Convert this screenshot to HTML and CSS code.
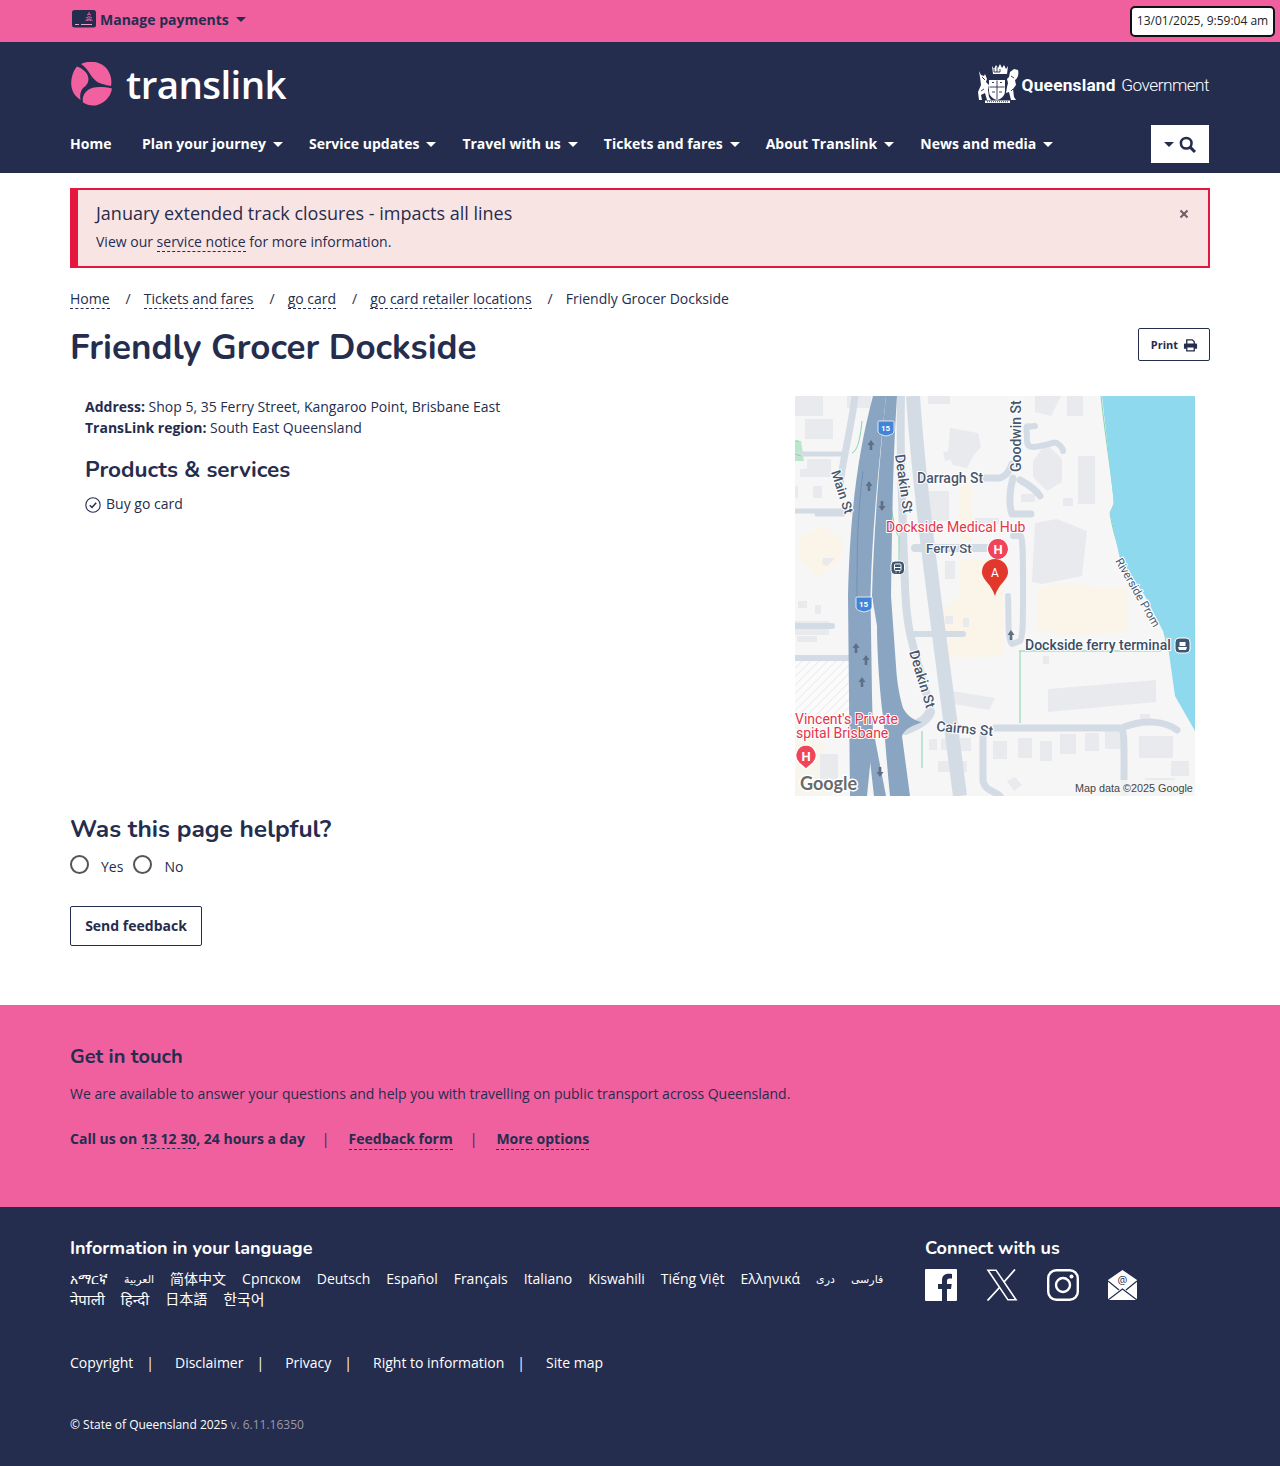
FILE: index.html
```html
<!DOCTYPE html>
<html lang="en">
<head>
<meta charset="utf-8">
<title>Friendly Grocer Dockside</title>
<link rel="stylesheet" href="styles.css">
</head>
<body>
<div class="topbar">
  <div class="topbar-inner">
    <a class="manage">
      <svg class="manage-icon" viewBox="0 0 24 18"><rect width="24" height="17.500" rx="2.500" fill="#252d4e"/><path d="M3 14.500h4M9 14.500h11" stroke="#e9a0c4" stroke-width="1.100"/><path d="M13.500 11a4 4 0 0 1 7 0M15 11a2.300 2.300 0 0 1 4 0M14 8a4.500 4.500 0 0 1 6 0M15 5a3 3 0 0 1 4 0M16 3h2" fill="none" stroke="#f1609f" stroke-width="1"/></svg>
      <span>Manage payments</span><i class="caret dark"></i>
    </a>
  </div>
  <div class="clock">13/01/2025, 9:59:04 am</div>
</div>
<header class="header">
  <div class="brand-row">
    <a class="logo">
      <svg class="logo-mark" viewBox="0 0 44 44"><g fill="#f1609f"><path d="M11 2C18-1.500 28-1 34 4C40 9 42.500 17 41 24C34 22.500 28 21.500 25 18C20 14 18 6 11 2Z"/><path d="M7 4.500C2 10 0 20 2 27C3 31 6 35 10.500 38C9.500 32 11 27 15 24.500C20 20 19 14 15.500 10C13 7.500 10.500 5.500 7 4.500Z"/><path d="M13 40.500C12 35 14 31 18 28C22 25 30 24 42 26.500C41 33 37 38 32 41C26 44.500 19 44.500 13 40.500Z"/></g></svg>
      <span class="logo-text">translink</span>
    </a>
    <div class="qld">
      <svg class="crest" viewBox="0 0 44 44">
        <g fill="#fff">
          <path d="M16 4l2 3 2-4 2 3 2-4 2 4 2-3 2 4 2-3-1 8H17z"/>
          <path d="M13 18h16v11c0 5-4 8-8 9-4-1-8-4-8-9z"/>
          <path d="M3 9l2 4 3 1 1-2 2 5-1 3 3 3-1 5 1 7 2 3h-4l-2-7-4 2 1 5H3l-1-8 3-7-1-8z"/>
          <path d="M42 8c1 4 0 8-3 10l1 5-3 4 1 8 2 3h-5l-2-8-3 1 1-6 1-4-1-4 2-2 1-5 4-3z"/>
          <path d="M9 38.500h25v2.500H9z"/>
        </g>
        <g fill="none" stroke="#252d4e" stroke-width=".9">
          <path d="M21 18.500v19M13.500 25h15M16 20.500h2M24 20.500h2M16 30h3M23 30h3M15 14.500h12M18 10h6M18 7v3M21 5v5M24 7v3"/>
          <path d="M11 39.700h21" stroke-dasharray="1 1"/>
          <path d="M6 15l3 3M35 14l3 2M5 29l3-2M35 29l2-2"/>
        </g>
      </svg>
      <span class="qld-text"><b>Queensland</b> Government</span>
    </div>
  </div>
  <nav class="nav">
    <ul class="nav-list">
      <li class="nav-home">Home</li>
      <li>Plan your journey<i class="caret"></i></li>
      <li>Service updates<i class="caret"></i></li>
      <li>Travel with us<i class="caret"></i></li>
      <li>Tickets and fares<i class="caret"></i></li>
      <li>About Translink<i class="caret"></i></li>
      <li>News and media<i class="caret"></i></li>
    </ul>
    <button class="search"><i class="caret dark"></i><svg class="search-icon" viewBox="0 0 16 16"><circle cx="6.800" cy="6.800" r="5" fill="none" stroke="#252d4e" stroke-width="2.400"/><path d="M10.500 10.500L15 15" stroke="#252d4e" stroke-width="2.800"/></svg></button>
  </nav>
</header>
<main class="main">
  <div class="alert">
    <div>
      <p class="alert-title">January extended track closures - impacts all lines</p>
      <p class="alert-text">View our <a class="dash">service notice</a> for more information.</p>
    </div>
    <svg class="alert-close" viewBox="0 0 10 10"><path d="M1.500 1.500l7 7M8.500 1.500l-7 7" stroke="#6b5f66" stroke-width="2"/></svg>
  </div>
  <ol class="crumbs">
    <li><a class="dash">Home</a></li>
    <li><a class="dash">Tickets and fares</a></li>
    <li><a class="dash">go card</a></li>
    <li><a class="dash">go card retailer locations</a></li>
    <li>Friendly Grocer Dockside</li>
  </ol>
  <div class="title-row">
    <h1>Friendly Grocer Dockside</h1>
    <button class="print">Print
      <svg class="print-icon" viewBox="0 0 16 14"><path d="M4 6V1.500h6l2 2V6" fill="none" stroke="#252d4e" stroke-width="1.400"/><path d="M1 6.500a1 1 0 0 1 1-1h12a1 1 0 0 1 1 1V11h-3V9H4v2H1z" fill="#252d4e"/><path d="M4 9h8v4.300H4z" fill="none" stroke="#252d4e" stroke-width="1.400"/></svg>
    </button>
  </div>
  <div class="detail">
    <div class="info">
      <p><b>Address:</b> Shop 5, 35 Ferry Street, Kangaroo Point, Brisbane East</p>
      <p><b>TransLink region:</b> South East Queensland</p>
      <h2>Products &amp; services</h2>
      <div class="service">
        <svg class="check" viewBox="0 0 16 16"><circle cx="8" cy="8" r="7.200" fill="none" stroke="#252d4e" stroke-width="1.100"/><path d="M4.800 8.300l2.200 2.200 4.200-4.700" fill="none" stroke="#252d4e" stroke-width="1.500"/></svg>
        <span>Buy go card</span>
      </div>
    </div>
    <svg class="map" viewBox="0 0 400 400">
      <rect width="400" height="400" fill="#f6f6f6"/>
      <g fill="#faf5e8">
        <path d="M5 140l22-10 22 15-4 20-22 15-20-18z"/>
        <path d="M165 163h43v97l-70 2v-42l27-20z"/>
        <path d="M242 192l30-5 30 4 30 1v44l-60 4-30-6z"/>
        <path d="M165 90h12v55h-12z"/>
        <rect x="0" y="345" width="30" height="55" opacity=".6"/>
      </g>
      <path d="M0 45h6l3 20H0z" fill="#b8e8c9"/>
      <defs><pattern id="hatch" width="6" height="6" patternUnits="userSpaceOnUse" patternTransform="rotate(-45)"><rect width="6" height="6" fill="#fbfbfb"/><path d="M0 0h6" stroke="#e3e3e3" stroke-width="1.200"/></pattern></defs>
      <rect x="0" y="264" width="54" height="60" fill="url(#hatch)"/>
      <g fill="#e9eaed">
        <path d="M0 0h28v20H0zM10 23h28v20H10zM52 0h24v12H52zM133 0h22v8h-22zM12 63h24v18H12zM18 90h9v12h-9zM5 73h7v8H5zM0 90h3v12H0z"/>
        <path d="M155 32l28 5 3 14-8 9-6 12-14-3-5-10z"/><path d="M148 56l8-1 2 8-8 2z"/>
        <path d="M240 0h26l-10 20-16-4zM272 0h16v20h-16z"/>
        <path d="M238 65l13-18 16 16v23l-15 9-14-14z"/><path d="M283 60h17v48h-17z"/>
        <path d="M240 127l22-4 30 12-5 45-40 8-10-2z"/><path d="M180 122h24v6h-24z"/>
        <path d="M132 95h22v30h-22zM226 98h14v8h-14zM268 102h10v8h-10z"/>
        <path d="M150 165h10v18h-10zM28 162h12l-8 8-5-2zM3 205h9v7H3zM20 209h6v9h-6zM0 225h34v14H0zM2 240h20v6H2zM150 220h8v8h-8zM168 222h6v9h-6zM248 260h6v8h-6z"/>
        <path d="M253 293l108-9v22l-108 10z"/><path d="M345 318h10v6h-10z"/>
        <path d="M157 295l43 7-6 12-35-6zM134 343h8v11h-8zM146 343h8v11h-8zM165 342h11v13h-11zM143 365h29v11h-29z"/>
        <path d="M198 345h14v18h-14zM223 342h14l0 20h-14zM245 345h12v20h-12zM265 338h16v20h-16zM290 337h14v18h-14zM310 335h16v18h-16z"/>
        <path d="M344 340h34v22h-34zM376 365h18v15h-18zM350 382h30v18h-30z"/><path d="M212 385l8-4 7 8-8 6z"/>
        <path d="M25 358h18v25H25z"/>
      </g>
      <rect x="153" y="343" width="8" height="11" fill="#f8f0d8"/>
      <g fill="none" stroke="#d3dce5" stroke-linecap="round" stroke-linejoin="round">
        <path d="M60 0C55 40 48 60 45 90" stroke-width="7"/>
        <path d="M0 58h46M0 115h56M22 118h26" stroke-width="5"/>
        <path d="M0 230h37" stroke-width="6"/><path d="M0 262h55" stroke-width="6"/>
        <path d="M118 0C122 60 130 130 139 200L152 300 165 400" stroke-width="14" stroke-linecap="butt"/>
        <path d="M106 0C105 40 106 80 108 135S110 210 114 232C120 265 132 290 135 316" stroke-width="8"/>
        <path d="M135 316C132 325 120 330 110 334" stroke-width="10"/>
        <path d="M188 82H205C212 80 215 74 217 68" stroke-width="7"/>
        <path d="M218 82C214 95 214 110 217 118H236M225 84C232 88 240 92 245 100" stroke-width="7"/>
        <path d="M240 30C228 32 232 25 232 45 232 55 245 50 258 47 262 45 268 52 268 55" stroke-width="6"/>
        <path d="M120 152H195" stroke-width="8"/>
        <path d="M218 140H226C228 145 228 160 228 190 228 230 228 240 225 245L217 248C212 245 214 215 213 200" stroke-width="6"/>
        <path d="M118 238h50" stroke-width="6"/>
        <path d="M200 332H325C330 332 329 345 329 400M329 331C350 323 370 325 382 334" stroke-width="7"/>
        <path d="M188 336V385C190 395 200 395 205 400" stroke-width="7"/>
      </g>
      <g fill="none" stroke="#85d2ad" stroke-width="1">
        <path d="M306 0C310 40 320 100 319 108L315 117C318 135 322 150 330 165"/>
        <path d="M67 25C65 45 62 55 57 57M95 100C97 120 101 140 104 140V165M225 255V327M224 255H365C372 253 372 245 369 237M127 335V372"/>
        <path d="M0 58l6 2M0 45h4"/>
      </g>
      <path d="M307 0H400V335L380 300 372 243 350 200 325 163 315 117 319 108Z" fill="#8fd9ee"/>
      <g fill="#8aa5c2">
        <path d="M78 0H91C85 60 77 130 75.500 200L77 300 78 340 72 400H55L53 200C55 120 62 60 78 0Z"/>
        <path d="M91 0H102C98 60 97 130 96 200L101 270C102 290 106 305 108 312 112 320 120 325 127 326 118 330 110 332 107 340L115 400H95C92 370 90 340 88 320 84 290 82 250 82 230L77 200C79 130 85 60 91 0Z"/>
        <path d="M72 338H79L91 400H79Z"/>
      </g>
      <g fill="none" stroke="#6f8bb0" stroke-width=".8">
        <path d="M68 75C62 120 62 160 62 200"/>
      </g>
      <g fill="#5f6f85">
        <path d="M76 44l-3.500 5h2.200v5h2.600v-5h2.200z"/>
        <path d="M74 85l-3.500 5h2.200v5h2.600v-5h2.200zM61 247l-3.500 5h2.200v5h2.600v-5h2.200zM71 259l-3.500 5h2.200v5h2.600v-5h2.200zM67 281l-3.500 5h2.200v5h2.600v-5h2.200zM216 234l-3.500 5h2.200v5h2.600v-5h2.200z"/>
        <path d="M87 115l3.500-5h-2.200v-5h-2.600v5h-2.200zM85 381l3.500-5h-2.200v-5h-2.600v5h-2.200z"/>
      </g>
      <g class="map-shield">
        <path d="M84 25h14c1 0 1 1 1 2v8c0 3-4 4-8 5-4-1-8-2-8-5v-8c0-1 0-2 1-2z" fill="#4285d6" stroke="#fff" stroke-width=".8"/>
        <text x="90.500" y="34.500" text-anchor="middle">15</text>
        <path d="M62 201h14c1 0 1 1 1 2v8c0 3-4 4-8 5-4-1-8-2-8-5v-8c0-1 0-2 1-2z" fill="#4285d6" stroke="#fff" stroke-width=".8"/>
        <text x="68.500" y="210.500" text-anchor="middle">15</text>
      </g>
      <g class="map-road">
        <text x="122" y="87">Darragh St</text>
        <text x="131" y="157" class="sm">Ferry St</text>
        <text transform="translate(226 76) rotate(-90)">Goodwin St</text>
        <text transform="translate(100 59) rotate(82)">Deakin St</text>
        <text transform="translate(114 256) rotate(73)">Deakin St</text>
        <text transform="translate(36 76) rotate(72)" class="sm">Main St</text>
        <text transform="translate(141 335) rotate(5)">Cairns St</text>
        <text transform="translate(320 165) rotate(60)" class="xs">Riverside Prom</text>
      </g>
      <g class="map-poi">
        <text x="91" y="136">Dockside Medical Hub</text>
        <text x="0" y="328">Vincent's Private</text>
        <text x="1" y="342">spital Brisbane</text>
      </g>
      <text class="map-ferry" x="230" y="254">Dockside ferry terminal</text>
      <g>
        <rect x="96" y="165" width="13.500" height="13.500" rx="4" fill="#3f5570" stroke="#fff" stroke-width="1"/>
        <rect x="99.500" y="168" width="6.500" height="6.500" rx="1" fill="none" stroke="#fff" stroke-width="1"/><path d="M99.500 171.500h6.500M100.500 176h1M104 176h1" stroke="#fff"/>
        <rect x="380" y="242" width="15" height="15" rx="4" fill="#3f5570" stroke="#fff" stroke-width="1"/>
        <path d="M383 251h9l-1 3h-7zM384.500 250v-4h6v4" fill="#fff"/>
      </g>
      <g class="map-h">
        <path d="M203 142.500a10.500 10.500 0 1 1-.1 0z" fill="#ef4459" stroke="#fff" stroke-width="1.200"/>
        <text x="203" y="158">H</text>
        <path d="M11 349a10.500 10.500 0 0 1 7 18l-7 6-7-6a10.500 10.500 0 0 1 7-18z" fill="#ef4459" stroke="#fff" stroke-width="1.200"/>
        <text x="11" y="364.500">H</text>
      </g>
      <path d="M200 163c7 0 13 5.500 13 13 0 8-9 11-13 24-4-13-13-16-13-24 0-7.500 6-13 13-13z" fill="#e2372d"/>
      <text class="map-a" x="200" y="181">A</text>
      <text class="map-google" x="5" y="394">Google</text>
      <rect x="278" y="384" width="122" height="16" fill="#f6f6f6" fill-opacity=".8"/>
      <text class="map-credit" x="280" y="396">Map data ©2025 Google</text>
    </svg>
  </div>
  <section class="helpful">
    <h2 class="helpful-title">Was this page helpful?</h2>
    <div class="radios">
      <span class="radio"></span><span class="radio-label">Yes</span>
      <span class="radio"></span><span class="radio-label">No</span>
    </div>
    <button class="feedback">Send feedback</button>
  </section>
</main>
<section class="touch">
  <div class="wrap">
    <h2 class="touch-title">Get in touch</h2>
    <p class="touch-text">We are available to answer your questions and help you with travelling on public transport across Queensland.</p>
    <div class="touch-links">
      <span>Call us on <a class="dash">13 12 30</a>, 24 hours a day</span><span class="pipe">|</span>
      <a class="dash">Feedback form</a><span class="pipe">|</span>
      <a class="dash">More options</a>
    </div>
  </div>
</section>
<footer class="footer">
  <div class="wrap footer-top">
    <div class="langs">
      <h3>Information in your language</h3>
      <ul class="lang-list">
        <li>አማርኛ</li><li class="arabic">العربية</li><li>简体中文</li><li>Српском</li><li>Deutsch</li><li>Español</li><li>Français</li><li>Italiano</li><li>Kiswahili</li><li>Tiếng Việt</li><li>Ελληνικά</li><li class="arabic">دری</li><li class="arabic">فارسی</li><li class="lang-big">नेपाली</li><li class="lang-big">हिन्दी</li><li>日本語</li><li class="lang-big">한국어</li>
      </ul>
    </div>
    <div class="connect">
      <h3>Connect with us</h3>
      <div class="socials">
        <svg class="social" viewBox="0 0 32 32"><path d="M1 0h30a1 1 0 0 1 1 1v30a1 1 0 0 1-1 1h-9V20h4l.7-5H22v-3c0-1.600.6-2.500 2.500-2.500H27V5c-1-.1-2.200-.3-3.700-.3-3.800 0-6.300 2.300-6.300 6.500V15h-4v5h4v12H1a1 1 0 0 1-1-1V1a1 1 0 0 1 1-1z" fill="#fff"/></svg>
        <svg class="social" viewBox="0 0 32 32"><path d="M0.500 0.500h10L31.500 31.500H21.500zM3.500 2l18.800 28H28.500L9.700 2z" fill="#fff" fill-rule="evenodd"/><path d="M29 0.500L18 13M13.500 18.500L1.500 31.500" stroke="#fff" stroke-width="1.800"/></svg>
        <svg class="social" viewBox="0 0 32 32"><rect x="1.200" y="1.200" width="29.600" height="29.600" rx="8" fill="none" stroke="#fff" stroke-width="2.400"/><circle cx="16" cy="16" r="7" fill="none" stroke="#fff" stroke-width="2.400"/><circle cx="24.500" cy="7.500" r="2" fill="#fff"/></svg>
        <svg class="social" viewBox="0 0 32 32"><path d="M0 11L14.500 1 29 11v20H0z" fill="#fff"/><path d="M0 12l11 9M29 12l-11 9M0 31l14.500-11L29 31" fill="none" stroke="#252d4e" stroke-width="1.200"/><text class="at" x="14.500" y="15">@</text></svg>
      </div>
    </div>
  </div>
  <div class="wrap">
    <ul class="legal">
      <li>Copyright</li><li>Disclaimer</li><li>Privacy</li><li>Right to information</li><li>Site map</li>
    </ul>
    <p class="copy">© State of Queensland 2025 <span class="ver">v. 6.11.16350</span></p>
  </div>
</footer>
</body>
</html>
```
FILE: styles.css
```css
* { box-sizing: border-box; }
html, body { margin: 0; padding: 0; }
body { font-family: "Open Sans", "Noto Sans", "DejaVu Sans", "Noto Sans CJK SC", sans-serif; font-size: 14px; color: #252d4e; background: #fff; line-height: 21px; }
p, h1, h2, h3, ul, ol { margin: 0; padding: 0; list-style: none; }
.wrap { width: 1140px; margin: 0 auto; }
.dash { color: inherit; text-decoration: none; border-bottom: 1px dashed #252d4e; }

.topbar { height: 42px; background: #f0609f; position: relative; }
.topbar-inner { width: 1140px; margin: 0 auto; height: 42px; display: flex; align-items: flex-start; padding-top: 9px; }
.manage { display: flex; align-items: flex-start; font-weight: 700; font-size: 14px; color: #252d4e; margin-left: 2px; }
.manage .caret { margin-top: 8px; }
.manage-icon { width: 24px; height: 18px; margin-right: 4px; margin-top: 1px; }
.clock { position: absolute; right: 5px; top: 6px; width: 145px; height: 31px; border: 2px solid #111; border-radius: 5px; background: #fff; color: #222; font-size: 12px; line-height: 25px; text-align: center; white-space: nowrap; }
.caret { display: inline-block; width: 0; height: 0; border-left: 5px solid transparent; border-right: 5px solid transparent; border-top: 5px solid #fff; margin-left: 7px; vertical-align: 2px; }
.caret.dark { border-top-color: #252d4e; }

.header { background: #252d4e; height: 131px; }
.brand-row { width: 1140px; margin: 0 auto; height: 83px; display: flex; justify-content: space-between; align-items: center; }
.logo { display: flex; align-items: center; color: #fff; }
.logo-mark { width: 44px; height: 44px; margin-right: 12px; }
.logo-text { font-size: 38.500px; font-weight: 600; line-height: 44px; letter-spacing: -0.6px; margin-top: 1px; }
.qld { display: flex; align-items: center; color: #fff; margin-right: 1px; }
.crest { width: 44px; height: 44px; margin-right: 2px; }
.qld-text { font-family: Roboto, "Open Sans", sans-serif; font-size: 17.300px; font-weight: 300; white-space: nowrap; letter-spacing: -.55px; word-spacing: 2px; margin-top: 3px; }
.qld-text b { font-weight: 700; letter-spacing: .2px; }
.nav { width: 1140px; margin: 0 auto; display: flex; justify-content: space-between; align-items: center; height: 38px; padding-right: 1px; }
.nav-list { display: flex; gap: 26px; color: #fff; font-weight: 700; font-size: 14px; margin-top: -2px; }
.nav-list li { white-space: nowrap; }
.nav-home { margin-right: 4.500px; }
.search { width: 58px; height: 38px; background: #fff; border: 0; padding: 0; display: flex; align-items: center; justify-content: center; gap: 5px; }
.search .caret { margin-left: 0; }
.search-icon { width: 17px; height: 17px; margin-top: 1px; }

.main { width: 1140px; margin: 0 auto; }
.alert { margin-top: 15px; height: 80px; background: #f9e4e4; border: 2px solid #e5173f; border-left-width: 8px; padding: 11px 18px 0; display: flex; justify-content: space-between; }
.alert-title { font-size: 18px; line-height: 24px; }
.alert-text { margin-top: 7px; font-size: 14px; line-height: 20px; }
.alert-close { width: 10px; height: 10px; margin: 8px 1px 0 0; }

.crumbs { display: flex; margin-top: 20px; height: 21px; white-space: nowrap; }
.crumbs li + li::before { content: "/"; margin: 0 13px 0 16px; }
.title-row { display: flex; justify-content: space-between; align-items: flex-start; margin-top: 19px; height: 58px; }
h1 { font-family: "Nunito", "Lato", sans-serif; font-size: 35px; line-height: 40px; font-weight: 700; }
.print { width: 72px; height: 33px; border: 1px solid #252d4e; border-radius: 2px; background: #fff; color: #252d4e; font: 700 11px "Open Sans", sans-serif; padding: 0 0 0 1px; display: flex; align-items: center; justify-content: center; gap: 5px; }
.print-icon { width: 15px; height: 14px; }

.detail { display: flex; justify-content: space-between; padding: 0 15px; height: 400px; margin-top: 10px; }
.info b { font-weight: 700; }
.info h2 { font-family: "Nunito", "Lato", sans-serif; font-size: 22.500px; line-height: 28px; font-weight: 700; margin-top: 18px; }
.service { display: flex; align-items: center; gap: 5px; margin-top: 9px; }
.check { width: 16px; height: 16px; margin-top: 2px; }
.map { width: 400px; height: 400px; display: block; }
.map text { font-family: Roboto, "Liberation Sans", sans-serif; }
.map-shield text { fill: #fff; font-size: 8px; font-weight: 700; }
.map-road text { fill: #47576d; font-size: 14px; font-weight: 500; paint-order: stroke; stroke: #fff; stroke-width: 2px; }
.map-road .sm { font-size: 13.200px; }
.map-road .xs { font-size: 11.500px; font-weight: 400; }
.map-poi text { fill: #e4344a; font-size: 14px; paint-order: stroke; stroke: #fff; stroke-width: 2px; }
.map .map-ferry { fill: #3b4e66; font-size: 14px; font-weight: 500; paint-order: stroke; stroke: #fff; stroke-width: 2px; }
.map-h text { fill: #fff; font-size: 13px; font-weight: 700; text-anchor: middle; }
.map .map-a { fill: #fff; font-size: 12px; text-anchor: middle; }
.map .map-google { fill: #6a6a6a; font-family: Lato, sans-serif; font-size: 18px; font-weight: 700; paint-order: stroke; stroke: #fff; stroke-width: 3px; }
.map .map-credit { fill: #444; font-size: 10.800px; font-family: "Liberation Sans", sans-serif; }

.helpful { height: 209px; padding-top: 18px; }
.helpful-title { font-family: "Nunito", "Lato", sans-serif; font-size: 24.500px; line-height: 30px; font-weight: 700; }
.radios { display: flex; align-items: center; margin-top: 10px; height: 22px; }
.radio { width: 19px; height: 19px; border: 2px solid #555; border-radius: 50%; background: #fff; margin-top: -1px; }
.radio-label { margin: 3px 10px 0 12px; }
.feedback { display: block; margin-top: 30px; width: 132px; height: 40px; background: #fff; border: 1px solid #252d4e; border-radius: 2px; font: 700 14px "Open Sans", sans-serif; color: #252d4e; padding: 0 0 2px; }

.touch { background: #f0609f; height: 202px; padding-top: 39px; color: #252d4e; }
.touch-title { font-family: "Nunito", "Lato", sans-serif; font-size: 20px; line-height: 26px; font-weight: 700; }
.touch-text { margin-top: 13px; }
.touch-links { display: flex; margin-top: 24px; font-weight: 700; white-space: nowrap; }
.pipe { margin: 0 19px 0 17px; font-weight: 400; }

.footer { background: #252d4e; height: 259px; color: #fff; padding-top: 29px; }
.footer-top { display: flex; justify-content: space-between; height: 98px; }
.langs { width: 820px; }
.footer h3 { font-family: "Nunito", "Lato", sans-serif; font-size: 18px; line-height: 24px; font-weight: 700; }
.lang-list { display: flex; flex-wrap: wrap; column-gap: 16px; margin-top: 9px; line-height: 20px; }
.arabic { font-size: 11px; }
.lang-big { font-size: 15px; }
.connect { width: 285px; }
.socials { display: flex; gap: 29px; margin-top: 9px; }
.social { width: 32px; height: 32px; }
.at { font-size: 11px; text-anchor: middle; fill: #252d4e; font-family: "Open Sans", sans-serif; }
.legal { display: flex; margin-top: 18px; }
.legal li + li::before { content: "|"; margin: 0 21px 0 13px; }
.copy { font-size: 12px; margin-top: 41px; }
.ver { color: #9a9aa5; }
```
